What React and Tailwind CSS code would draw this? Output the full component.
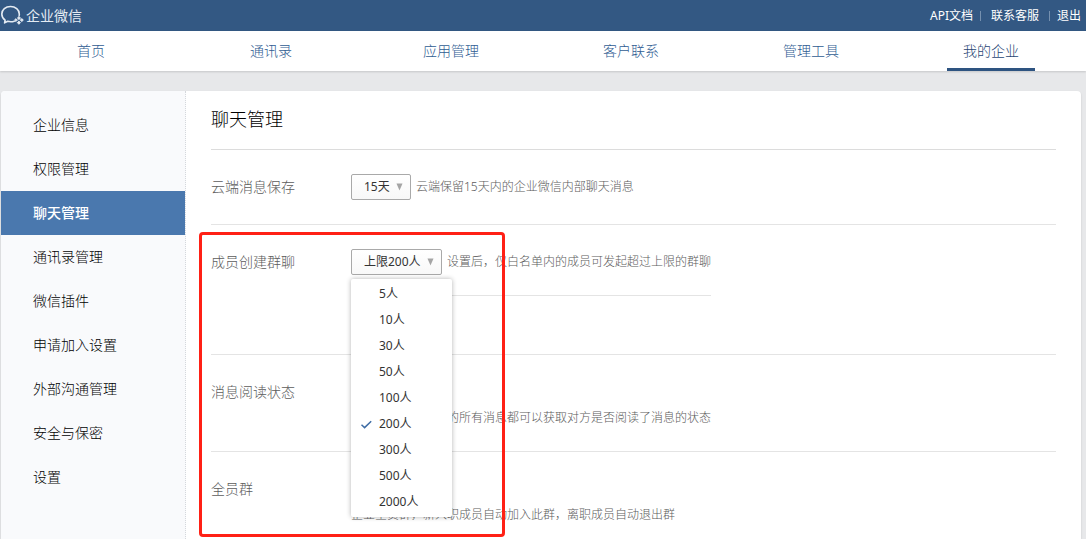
import { useState } from 'react';

const navItems = ['首页', '通讯录', '应用管理', '客户联系', '管理工具', '我的企业'];

const menuItems = [
    '企业信息',
    '权限管理',
    '聊天管理',
    '通讯录管理',
    '微信插件',
    '申请加入设置',
    '外部沟通管理',
    '安全与保密',
    '设置',
];

const limits = ['5', '10', '30', '50', '100', '200', '300', '500', '2000'];

const Logo = () => (
    <svg className="w-6 h-6 shrink-0" viewBox="0 0 24 24" fill="none" stroke="#e4ebf3" strokeWidth="1.6">
        <path
            d="M19.200 11.400C19.300 10.900 19.300 10.500 19.300 10 19.300 5.900 15.400 2.500 10.500 2.500S1.800 5.900 1.800 10c0 2.500 1.300 4.700 3.300 6.100L4.600 18.900l3.100-1.600c2.100.6 4.400.6 6.500-.1"
            strokeLinejoin="round"
            strokeLinecap="round"
        />
        <g strokeWidth="1" fill="#e4ebf3" strokeLinejoin="round">
            <path d="M18.900 12.400l1.600 1.800-1.600 1.300-1.400-1.300z" />
            <path d="M21.700 14.600l1.600 1.500-1.600 1.500-1.300-1.500z" />
            <path d="M18.900 17.200l1.500 1.400-1.500 1.700-1.500-1.700z" />
            <path d="M16 14.700l1.400 1.400-1.400 1.400-1.500-1.400z" />
        </g>
    </svg>
);

const Select = ({ id, value, options, onChange, className }) => (
    <div className={`relative shrink-0 ${className}`}>
        <select
            id={id}
            value={value}
            onChange={(e) => onChange(e.target.value)}
            className="appearance-none w-full h-[26px] pl-3 text-xs font-normal text-[#333] border border-[#a9a9a9] rounded-xs bg-linear-to-b from-white to-[#f8f8f8]"
        >
            {options.map((o) => (
                <option key={o.value} value={o.value}>{o.label}</option>
            ))}
        </select>
        <svg className="absolute right-2 top-[9px] w-[7px] h-2 pointer-events-none" viewBox="0 0 7 8">
            <path d="M0.500 0.500h6L3.500 7.500z" fill="#a5a5a5" />
        </svg>
    </div>
);

const Row = ({ label, htmlFor, className = '', children }) => (
    <div className={`flex items-start pt-6 ${className}`}>
        <label htmlFor={htmlFor} className="w-[140px] shrink-0 text-sm leading-[26px] text-[#5c5c5c]">
            {label}
        </label>
        {children}
    </div>
);

export default function App() {
    const [active, setActive] = useState('聊天管理');
    const [days, setDays] = useState('15');
    const [limit, setLimit] = useState('200');
    const [readStatus, setReadStatus] = useState(true);
    const [allGroup, setAllGroup] = useState(true);

    return (
        <div className="min-h-screen flex flex-col bg-[#e7e8ea] text-xs font-light font-['Noto_Sans','Noto_Sans_CJK_SC',sans-serif]">
            <header className="h-[31px] flex items-center justify-between pr-[5px] bg-[#335883] text-white">
                <a href="#" className="flex items-center gap-[2px] text-sm font-normal text-[#e4ebf3]">
                    <Logo />
                    企业微信
                </a>
                <div className="flex items-center font-normal">
                    <a href="#api">API文档</a>
                    <span className="w-px h-[10px] ml-[7px] mr-[10px] bg-[#7590af]" />
                    <a href="#service">联系客服</a>
                    <span className="w-px h-[10px] ml-[10px] mr-[7px] bg-[#7590af]" />
                    <a href="#logout">退出</a>
                </div>
            </header>

            <nav className="h-10 grid grid-cols-6 justify-items-center pl-px pr-[5px] bg-white shadow-[0_1px_2px_rgba(0,0,0,0.15)]">
                {navItems.map((item) => (
                    <a
                        key={item}
                        href="#"
                        className={`h-10 px-4 text-sm leading-10 ${
                            item === '我的企业' ? 'border-b-3 border-[#2e5481] text-[#1f4573]' : 'text-[#2f5c92]'
                        }`}
                    >
                        {item}
                    </a>
                ))}
            </nav>

            <div className="flex-1 flex mt-5 ml-px mr-[5px] bg-white rounded-t-sm shadow-[0_1px_2px_rgba(0,0,0,0.15)]">
                <aside className="w-[185px] shrink-0 pt-3 bg-[#f9fafc] border-r border-dotted border-[#d5d8dc] rounded-tl-sm">
                    {menuItems.map((item) => (
                        <a
                            key={item}
                            href="#"
                            onClick={() => setActive(item)}
                            className={`block pl-8 text-sm leading-[44px] ${
                                item === active ? 'bg-[#4a78ae] text-white font-medium' : 'text-black'
                            }`}
                        >
                            {item}
                        </a>
                    ))}
                </aside>

                <main className="relative flex-1 px-[25px]">
                    <h1 className="h-[59px] text-lg leading-[56px] text-black border-b border-[#dcdcdc]">聊天管理</h1>

                    <Row label="云端消息保存" htmlFor="days" className="h-[75px] border-b border-[#e4e4e4]">
                        <Select
                            id="days"
                            value={days}
                            onChange={setDays}
                            options={[{ value: '15', label: '15天' }, { value: '30', label: '30天' }]}
                            className="w-[60px]"
                        />
                        <span className="ml-[5px] leading-[26px] text-[#5c5c5c]">云端保留15天内的企业微信内部聊天消息</span>
                    </Row>

                    <Row label="成员创建群聊" htmlFor="limit" className="h-[130px] border-b border-[#e4e4e4]">
                        <div className="relative flex items-start pb-5 border-b border-[#e4e4e4]">
                            <Select
                                id="limit"
                                value={limit}
                                onChange={setLimit}
                                options={limits.map((n) => ({ value: n, label: `上限${n}人` }))}
                                className="w-[91px]"
                            />
                            <span className="ml-[5px] leading-[26px] text-[#5c5c5c]">
                                设置后，仅白名单内的成员可发起超过上限的群聊
                            </span>

                            <ul className="absolute left-0 top-[30px] z-10 w-[101px] py-[2px] bg-white rounded-xs shadow-[0_0_5px_rgba(0,0,0,0.3)]">
                                {limits.map((n) => (
                                    <li key={n}>
                                        <button
                                            type="button"
                                            onClick={() => setLimit(n)}
                                            className="w-full h-[26px] flex items-center pl-[10px] text-left font-normal text-[#333]"
                                        >
                                            <span className="w-[18px]">
                                                {n === limit && (
                                                    <svg className="w-[11px] h-[9px]" viewBox="0 0 11 9" fill="none">
                                                        <path d="M0.500 4.800L3.600 7.600 10.200 1.200" stroke="#3f6da5" strokeWidth="1.500" />
                                                    </svg>
                                                )}
                                            </span>
                                            {n}人
                                        </button>
                                    </li>
                                ))}
                            </ul>
                        </div>
                    </Row>

                    <Row label="消息阅读状态" htmlFor="read" className="h-[97px] border-b border-[#e4e4e4]">
                        <div className="text-[#5c5c5c] leading-[26px]">
                            <div className="h-[26px] flex items-center">
                                <input id="read" type="checkbox" checked={readStatus} onChange={() => setReadStatus(!readStatus)} />
                            </div>
                            <p>开启后，企业成员的所有消息都可以获取对方是否阅读了消息的状态</p>
                        </div>
                    </Row>

                    <Row label="全员群" htmlFor="all">
                        <div className="text-[#5c5c5c] leading-[26px]">
                            <div className="h-[26px] flex items-center">
                                <input id="all" type="checkbox" checked={allGroup} onChange={() => setAllGroup(!allGroup)} />
                            </div>
                            <p>企业全员群，新入职成员自动加入此群，离职成员自动退出群</p>
                        </div>
                    </Row>

                    {/* highlight frame around the group limit setting */}
                    <div className="absolute left-[13px] top-[141px] z-20 w-[306px] h-[305px] border-3 border-[#ff2015] rounded-sm pointer-events-none" />
                </main>
            </div>
        </div>
    );
}
